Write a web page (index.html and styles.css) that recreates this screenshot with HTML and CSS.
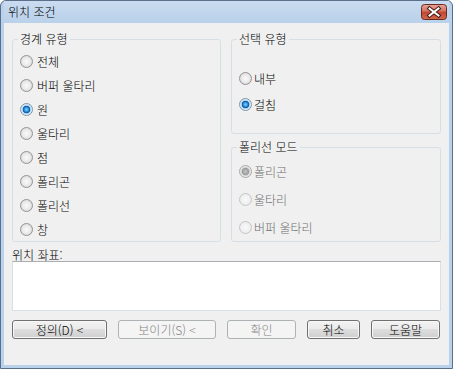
FILE: index.html
```html
<!DOCTYPE html>
<html lang="ko">
<head>
  <meta charset="UTF-8" />
  <title>위치 조건</title>
  <link rel="stylesheet" href="styles.css">
</head>
<body>
  <div class="window">
    <div class="titlebar">
      <span class="title">위치 조건</span>
      <span class="close">
        <svg width="26" height="16" viewBox="0 0 26 16">
          <defs>
            <linearGradient id="closeFill" x1="0" y1="0" x2="0" y2="1">
              <stop offset="0" stop-color="#e8a497"/>
              <stop offset="0.45" stop-color="#d27360"/>
              <stop offset="0.5" stop-color="#c4452e"/>
              <stop offset="1" stop-color="#cf6a4f"/>
            </linearGradient>
          </defs>
          <rect x="0.5" y="0.5" width="25" height="15" rx="3" fill="url(#closeFill)" stroke="#6b2a22"/>
          <path d="M8.5 4.5 L17.5 11.5 M17.5 4.5 L8.5 11.5" stroke="#3d1510" stroke-width="4" stroke-linecap="square"/>
          <path d="M8.5 4.5 L17.5 11.5 M17.5 4.5 L8.5 11.5" stroke="#ffffff" stroke-width="2" stroke-linecap="square"/>
        </svg>
      </span>
    </div>

    <div class="client">
      <div class="groups">
        <fieldset class="group">
          <legend>경계 유형</legend>
          <div class="options boundary">
            <div class="option"><span class="radio"></span>전체</div>
            <div class="option"><span class="radio"></span>버퍼 울타리</div>
            <div class="option"><span class="radio on"></span>원</div>
            <div class="option"><span class="radio"></span>울타리</div>
            <div class="option"><span class="radio"></span>점</div>
            <div class="option"><span class="radio"></span>폴리곤</div>
            <div class="option"><span class="radio"></span>폴리선</div>
            <div class="option"><span class="radio"></span>창</div>
          </div>
        </fieldset>

        <div class="side">
          <fieldset class="group">
            <legend>선택 유형</legend>
            <div class="options selection">
              <div class="option"><span class="radio"></span>내부</div>
              <div class="option"><span class="radio on"></span>걸침</div>
            </div>
          </fieldset>

          <fieldset class="group mode">
            <legend>폴리선 모드</legend>
            <div class="options disabled">
              <div class="option"><span class="radio on"></span>폴리곤</div>
              <div class="option"><span class="radio"></span>울타리</div>
              <div class="option"><span class="radio"></span>버퍼 울타리</div>
            </div>
          </fieldset>
        </div>
      </div>

      <div class="coords-label">위치 좌표:</div>
      <div class="coords"></div>

      <div class="buttons">
        <span class="btn w-define">정의(D) &lt;</span>
        <span class="btn w-show off">보이기(S) &lt;</span>
        <span class="btn w-ok off">확인</span>
        <span class="btn w-cancel">취소</span>
        <span class="btn w-help">도움말</span>
      </div>
    </div>
  </div>
</body>
</html>
```

FILE: styles.css
```css
* {
  box-sizing: border-box;
}

body {
  margin: 0;
  font-family: "Noto Sans CJK KR", "Liberation Sans", sans-serif;
  font-size: 12px;
  font-weight: 300;
  color: #000;
  background: #fff;
}

.window {
  width: 453px;
  height: 369px;
  border: 1px solid #5b6f8a;
  border-radius: 6px 6px 0 0;
  background: #b9d1ea;
  padding: 0 3px 3px;
  display: flex;
  flex-direction: column;
}

.titlebar {
  height: 22px;
  display: flex;
  align-items: flex-start;
  justify-content: space-between;
  background: linear-gradient(#c9dbf0, #b9d1ea);
}

.title {
  padding: 3px 0 0 4px;
  line-height: 16px;
}

.close {
  display: block;
  height: 16px;
  margin: 3px 2px 0 0;
}

.close svg {
  display: block;
}

.client {
  flex: 1;
  background: #f0f0f0;
  padding: 9px 9px 0 8px;
}

.groups {
  display: grid;
  grid-template-columns: 209px 210px;
  column-gap: 10px;
  height: 210px;
}

.side {
  display: flex;
  flex-direction: column;
  gap: 6px;
}

.group {
  margin: 0;
  padding: 0 0 0 7px;
  border: 1px solid #d5dfe5;
  border-radius: 3px;
  min-width: 0;
}

.group legend {
  margin-left: -2px;
  padding: 0 2px;
  line-height: 14px;
  color: #000;
}

.mode {
  flex: 1;
}

.options {
  display: flex;
  flex-direction: column;
}

.option {
  display: flex;
  align-items: center;
  gap: 4px;
  white-space: nowrap;
}

.boundary {
  padding-top: 3px;
}

.boundary .option {
  height: 24px;
}

.selection {
  padding: 19px 0 16px;
}

.selection .option {
  height: 26px;
  gap: 2px;
}

.disabled {
  padding-top: 3px;
  color: #6d6d6d;
}

.disabled .option {
  height: 28px;
  gap: 2px;
}

.radio {
  width: 13px;
  height: 13px;
  flex: none;
  border-radius: 50%;
  border: 1px solid #939393;
  background: radial-gradient(circle, #fafafa 0, #ececec 45%, #cfcfcf 100%);
}

.radio.on {
  border-color: #7f95a8;
  background: radial-gradient(circle, #86d4ff 0, #2b8fdc 28%, #0d4f9d 44%, #a9d6f3 52%, #e8f4fb 72%, #d0d0d0 100%);
}

.disabled .radio {
  border-color: #c6c6c6;
  background: radial-gradient(circle, #f9f9f9 0, #f1f1f1 50%, #e2e2e2 100%);
}

.disabled .radio.on {
  border-color: #a9a9a9;
  background: radial-gradient(circle, #c4c4c4 0, #9a9a9a 42%, #d9d9d9 54%, #f2f2f2 74%, #d6d6d6 100%);
}

.coords-label {
  margin-top: 6px;
  height: 13px;
  line-height: 13px;
}

.coords {
  width: 429px;
  height: 50px;
  background: #fff;
  border: 1px solid #dbdfe6;
  border-top-color: #abadb3;
}

.buttons {
  display: flex;
  gap: 11px;
  margin-top: 9px;
}

.btn {
  height: 19px;
  display: flex;
  align-items: center;
  justify-content: center;
  border: 1px solid #707070;
  border-radius: 3px;
  background: linear-gradient(#f2f2f2 0%, #ebebeb 45%, #dddddd 50%, #cfcfcf 100%);
  box-shadow: inset 0 0 0 1px #f8f8f8;
  line-height: 14px;
}

.btn.off {
  border-color: #adb2b5;
  background: #f4f4f4;
  box-shadow: none;
  color: #838383;
}

.w-define { width: 95px; }
.w-show { width: 98px; }
.w-ok { width: 69px; }
.w-cancel { width: 53px; }
.w-help { width: 69px; }
```
